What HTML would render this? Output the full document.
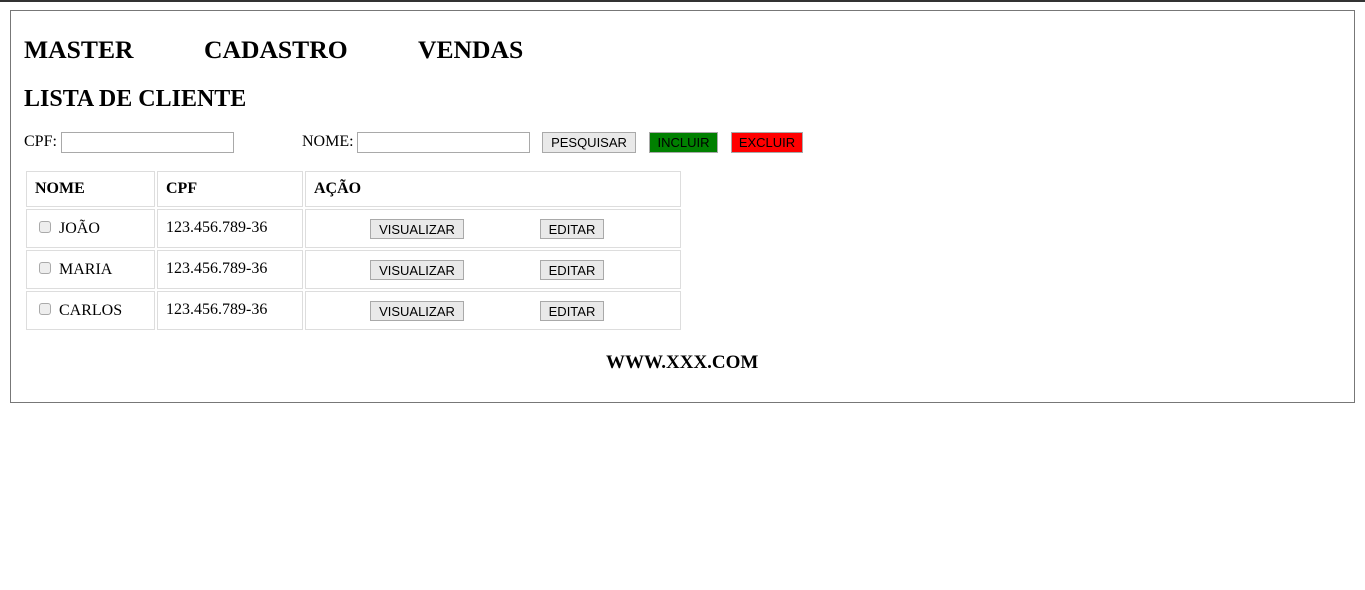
<!DOCTYPE html>
<html><head><meta charset="utf-8"><style>
body{margin:0;width:1365px;height:590px;background:#fff;position:relative;font-family:"Liberation Serif",serif;color:#000;overflow:hidden}
.a{position:absolute;white-space:nowrap}
.h{font-weight:bold;font-size:25.6px}
.inp{position:absolute;height:19px;border:1px solid #a9a9a9;background:#fff;box-sizing:content-box}
.btn{position:absolute;box-sizing:border-box;border:1px solid #a9a9a9;background:#e9e9e9;font-family:"Liberation Sans",sans-serif;font-size:13px;text-align:center;line-height:19px;color:#000}
.cell{position:absolute;box-sizing:border-box;border:1px solid #ddd}
.cb{position:absolute;width:12px;height:12px;border:1px solid #aaa;border-radius:3px;background:#eee;box-sizing:border-box}
.t{font-size:16px}
</style></head><body>
<div class="a" style="left:0;top:0;width:1365px;height:2px;background:#333"></div>
<div class="a" style="left:10px;top:10px;width:1343px;height:391px;border:1px solid #777"></div>
<div class="a h" style="left:24px;top:35px">MASTER</div>
<div class="a h" style="left:204px;top:35px">CADASTRO</div>
<div class="a h" style="left:418px;top:35px">VENDAS</div>
<div class="a" style="left:24px;top:86px;font-weight:bold;font-size:24px">LISTA DE CLIENTE</div>
<div class="a t" style="left:24px;top:133px">CPF:</div>
<div class="inp" style="left:61px;top:132px;width:171px"></div>
<div class="a t" style="left:302px;top:133px">NOME:</div>
<div class="inp" style="left:357px;top:132px;width:171px"></div>
<div class="btn" style="left:542px;top:132px;width:94px;height:21px">PESQUISAR</div>
<div class="btn" style="left:649px;top:132px;width:69px;height:21px;background:#008000">INCLUIR</div>
<div class="btn" style="left:731px;top:132px;width:72px;height:21px;background:#f00">EXCLUIR</div>

<div class="cell" style="left:26px;top:171px;width:129px;height:36px"></div>
<div class="cell" style="left:157px;top:171px;width:146px;height:36px"></div>
<div class="cell" style="left:305px;top:171px;width:376px;height:36px"></div>
<div class="a" style="left:35px;top:180px;font-weight:bold;font-size:16px">NOME</div>
<div class="a" style="left:166px;top:180px;font-weight:bold;font-size:16px">CPF</div>
<div class="a" style="left:314px;top:180px;font-weight:bold;font-size:16px">AÇÃO</div>

<div class="cell" style="left:26px;top:209px;width:129px;height:39px"></div>
<div class="cell" style="left:157px;top:209px;width:146px;height:39px"></div>
<div class="cell" style="left:305px;top:209px;width:376px;height:39px"></div>
<div class="cb" style="left:39px;top:221px"></div>
<div class="a t" style="left:59px;top:220px">JOÃO</div>
<div class="a t" style="left:166px;top:219px">123.456.789-36</div>
<div class="btn" style="left:370px;top:219px;width:94px;height:20px">VISUALIZAR</div>
<div class="btn" style="left:540px;top:219px;width:64px;height:20px">EDITAR</div>

<div class="cell" style="left:26px;top:250px;width:129px;height:39px"></div>
<div class="cell" style="left:157px;top:250px;width:146px;height:39px"></div>
<div class="cell" style="left:305px;top:250px;width:376px;height:39px"></div>
<div class="cb" style="left:39px;top:262px"></div>
<div class="a t" style="left:59px;top:261px">MARIA</div>
<div class="a t" style="left:166px;top:260px">123.456.789-36</div>
<div class="btn" style="left:370px;top:260px;width:94px;height:20px">VISUALIZAR</div>
<div class="btn" style="left:540px;top:260px;width:64px;height:20px">EDITAR</div>

<div class="cell" style="left:26px;top:291px;width:129px;height:39px"></div>
<div class="cell" style="left:157px;top:291px;width:146px;height:39px"></div>
<div class="cell" style="left:305px;top:291px;width:376px;height:39px"></div>
<div class="cb" style="left:39px;top:303px"></div>
<div class="a t" style="left:59px;top:302px">CARLOS</div>
<div class="a t" style="left:166px;top:301px">123.456.789-36</div>
<div class="btn" style="left:370px;top:301px;width:94px;height:20px">VISUALIZAR</div>
<div class="btn" style="left:540px;top:301px;width:64px;height:20px">EDITAR</div>

<div class="a" style="left:606px;top:352px;font-weight:bold;font-size:19px">WWW.XXX.COM</div>
</body></html>
